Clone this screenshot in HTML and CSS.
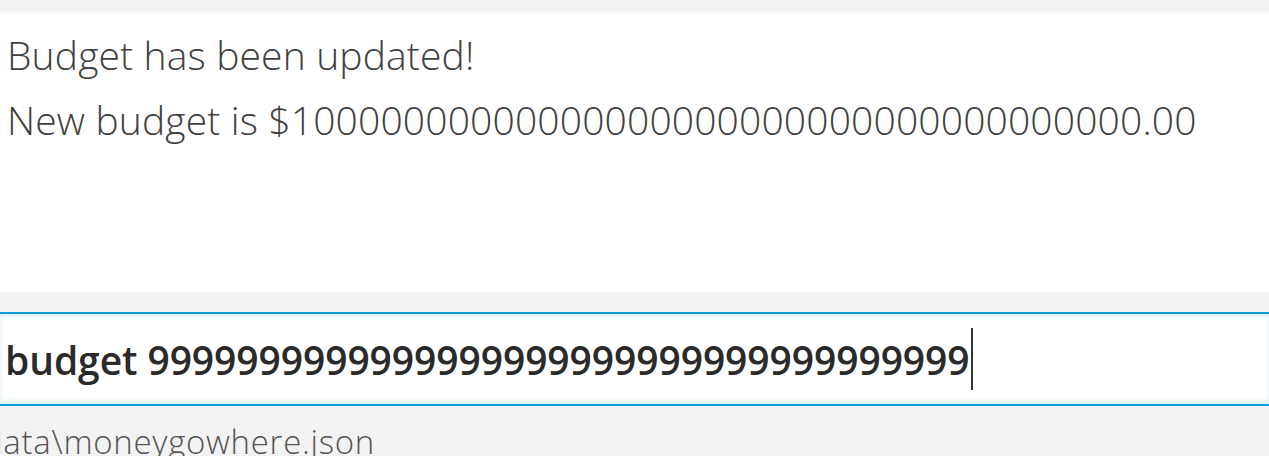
FILE: index.html
```html
<!DOCTYPE html>
<html>
<head>
<meta charset="utf-8">
<link rel="stylesheet" href="styles.css">
</head>
<body>
<div class="app">
  <div class="topbar"></div>
  <div class="result">
    <div class="line">Budget has been updated!</div>
    <div class="line">New budget is $10000000000000000000000000000000000000.00</div>
  </div>
  <div class="spacer"></div>
  <div class="command">
    <span class="cmd-text">budget 9999999999999999999999999999999999999</span><span class="caret"></span>
  </div>
  <div class="status"><span class="status-text">data\moneygowhere.json</span></div>
</div>
</body>
</html>
```
FILE: styles.css
```css
html, body {
  margin: 0;
  padding: 0;
  background: #f3f3f3;
  overflow: hidden;
}
.app {
  width: 1269px;
  height: 456px;
  display: flex;
  flex-direction: column;
  font-family: "Segoe UI", "Open Sans", sans-serif;
}
.topbar {
  height: 8px;
  background: #f2f2f2;
}
.result {
  height: 284px;
  background: linear-gradient(#ececec 0, #ffffff 7px);
  padding: 14px 0 0 7px;
  box-sizing: border-box;
  color: #404040;
  font-weight: 300;
  font-size: 39px;
  letter-spacing: 0.15px;
  line-height: 65px;
}
.line {
  white-space: nowrap;
}
.spacer {
  height: 20px;
  background: #f3f3f3;
}
.command {
  height: 94px;
  box-sizing: border-box;
  border-top: 2px solid #0b9cd8;
  border-bottom: 2px solid #0b9cd8;
  background: #ffffff;
  box-shadow: inset 0 4px 4px -1px #d9eff9, inset 0 -4px 4px -1px #d9eff9;
  display: flex;
  align-items: center;
  padding-left: 5px;
  color: #2a2a2a;
  font-weight: 600;
  font-size: 39px;
  letter-spacing: -0.08px;
}
.cmd-text {
  white-space: nowrap;
}
.caret {
  display: inline-block;
  width: 2px;
  height: 62px;
  background: #333;
  margin-left: 1px;
}
.status {
  flex: 1;
  background: #f3f3f3;
  overflow: hidden;
}
.status-text {
  display: block;
  margin-left: -17px;
  margin-top: 13px;
  font-size: 33px;
  font-weight: 300;
  letter-spacing: 0.7px;
  color: #555;
  white-space: nowrap;
}
```
